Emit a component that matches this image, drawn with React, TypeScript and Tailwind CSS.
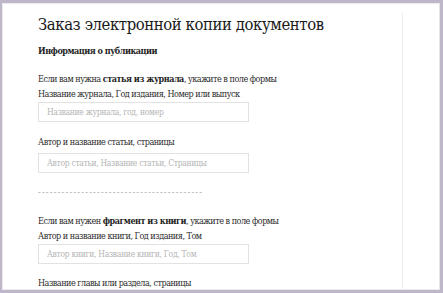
import React from "react";

function Field({ placeholder }: { placeholder: string }) {
  return (
    <div className="w-[211px] h-[20px] border border-[#e2e2e2] flex items-center px-[8px] text-[8.5px] tracking-[-0.3px] text-[#b5b5b5] bg-white">
      {placeholder}
    </div>
  );
}

export default function App() {
  return (
    <div className="w-[443px] h-[293px] bg-[#bdb7c9] pt-[3px] pl-[2px] pr-[3px] pb-[3px] overflow-hidden [font-family:DejaVu_Serif,serif] [font-stretch:condensed]">
      <div className="w-full h-full bg-white border border-[#ececf0] border-r-[#e4e4ea] flex overflow-hidden">
        <div className="w-[399px] shrink-0 pl-[35px] pt-[9px] text-[#2b2b2b] text-[9px] tracking-[-0.5px] leading-[15px]">
          <h1 className="text-[16.5px] tracking-[-0.4px] leading-[24px] text-[#1a1a1a] font-normal">
            Заказ электронной копии документов
          </h1>
          <div className="mt-[7px] font-bold text-[#1f1f1f]">Информация о публикации</div>
          <div className="mt-[13px]">
            Если вам нужна <b className="text-[#1f1f1f]">статья из журнала</b>, укажите в поле формы
          </div>
          <div>Название журнала, Год издания, Номер или выпуск</div>
          <div>
            <Field placeholder="Название журнала, год, номер" />
          </div>
          <div className="mt-[13px]">Автор и название статьи, страницы</div>
          <div className="mt-[3px]">
            <Field placeholder="Автор статьи, Название статьи, Страницы" />
          </div>
          <div className="mt-[12px] text-[#aaa] tracking-[1.2px] whitespace-nowrap">
            ------------------------------------------
          </div>
          <div className="mt-[14px]">
            Если вам нужен <b className="text-[#1f1f1f]">фрагмент из книги</b>, укажите в поле формы
          </div>
          <div>Автор и название книги, Год издания, Том</div>
          <div>
            <Field placeholder="Автор книги, Название книги, Год, Том" />
          </div>
          <div className="mt-[12px]">Название главы или раздела, страницы</div>
        </div>
        <div className="flex-1 pt-[9px]">
          <div className="h-full border-l border-[#ededf0]" />
        </div>
      </div>
    </div>
  );
}
